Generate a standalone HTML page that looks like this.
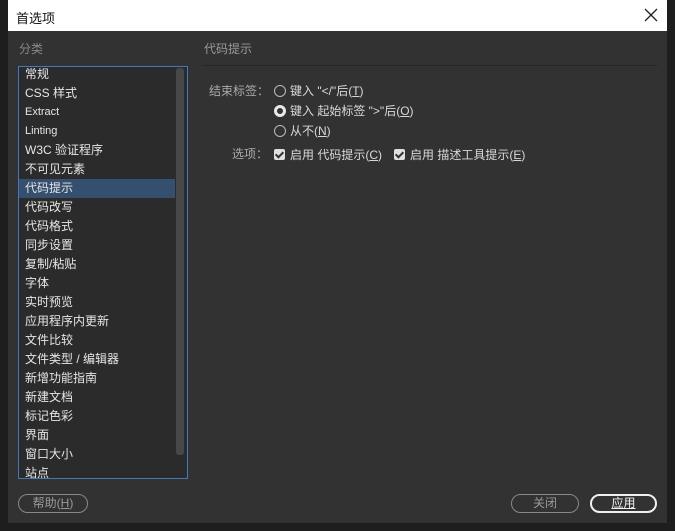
<!DOCTYPE html>
<html><head><meta charset="utf-8"><style>
*{margin:0;padding:0;box-sizing:border-box}
body{width:675px;height:531px;background:#1e1e1e;font-family:"Liberation Sans","Noto Sans CJK SC",sans-serif;font-size:12px;color:#d8d8d8;position:relative;overflow:hidden}
.title{position:absolute;left:8px;top:0;width:659px;height:31px;background:#fff;color:#111;font-size:13px;padding:8px 0 0 8px}
.x{position:absolute;left:636px;top:8px}
.body{position:absolute;left:8px;top:31px;width:659px;height:492px;background:#323232}
.a{position:absolute;white-space:nowrap}
.list{position:absolute;left:18px;top:66px;width:170px;height:413px;border:1px solid #3d7ac4;background:#2b2b2b;overflow:hidden}
.in{position:absolute;left:0;top:-2px;width:100%}
.in div{height:19px;line-height:19px;padding-left:6px;color:#e6e6e6;font-size:12px}
.in .sel{background:#35506e;margin-right:12px}
.sb{position:absolute;left:157px;top:1px;width:8px;height:387px;background:#484848;border-radius:3px}
.radio{display:inline-block;width:12px;height:12px;border:1px solid #bbb;border-radius:50%;vertical-align:-2px;margin-right:4px}
.radio.on{border:3px solid #e8e8e8;background:#333}
.cb{display:inline-block;width:11px;height:11px;background:#e0e0e0;border-radius:2px;vertical-align:-1px;margin-right:5px;position:relative}
.cb:after{content:"";position:absolute;left:3px;top:1px;width:3px;height:6px;border:solid #333;border-width:0 2px 2px 0;transform:rotate(45deg)}
.btn{position:absolute;height:19px;border:1px solid #888;border-radius:10px;text-align:center;line-height:17px;color:#999}
u{text-decoration:underline}
</style></head><body>
<div class="title">首选项<svg class="x" width="14" height="14" viewBox="0 0 14 14"><path d="M1 1L13 13M13 1L1 13" stroke="#222" stroke-width="1.3"/></svg></div>
<div class="body"></div>
<div class="a" style="left:19px;top:40px;color:#888;font-size:12px">分类</div>
<div class="a" style="left:204px;top:40px;color:#999;font-size:12px">代码提示</div>
<div class="a" style="left:203px;top:65px;width:454px;height:1px;background:#262626"></div>
<div class="list"><div class="in">
<div>常规</div><div>CSS 样式</div><div style="font-size:11px">Extract</div><div style="font-size:11px">Linting</div><div>W3C 验证程序</div><div>不可见元素</div><div class="sel">代码提示</div><div>代码改写</div><div>代码格式</div><div>同步设置</div><div>复制/粘贴</div><div>字体</div><div>实时预览</div><div>应用程序内更新</div><div>文件比较</div><div>文件类型 / 编辑器</div><div>新增功能指南</div><div>新建文档</div><div>标记色彩</div><div>界面</div><div>窗口大小</div><div>站点</div>
</div><span class="sb"></span>
</div>
<div class="a" style="left:209px;top:82px;color:#aaa">结束标签：</div>
<div class="a" style="left:274px;top:82px"><span class="radio"></span>键入 "&lt;/"后(<u>T</u>)</div>
<div class="a" style="left:274px;top:102px"><span class="radio on"></span>键入 起始标签 "&gt;"后(<u>O</u>)</div>
<div class="a" style="left:274px;top:122px"><span class="radio"></span>从不(<u>N</u>)</div>
<div class="a" style="left:232px;top:145px;color:#aaa">选项：</div>
<div class="a" style="left:274px;top:146px"><span class="cb"></span>启用 代码提示(<u>C</u>)</div>
<div class="a" style="left:394px;top:146px"><span class="cb"></span>启用 描述工具提示(<u>E</u>)</div>
<div class="btn" style="left:18px;top:494px;width:70px">帮助(<u>H</u>)</div>
<div class="btn" style="left:511px;top:494px;width:68px">关闭</div>
<div class="btn" style="left:590px;top:494px;width:67px;border:2px solid #f0f0f0;color:#f0f0f0;line-height:15px"><u>应用</u></div>
</body></html>
